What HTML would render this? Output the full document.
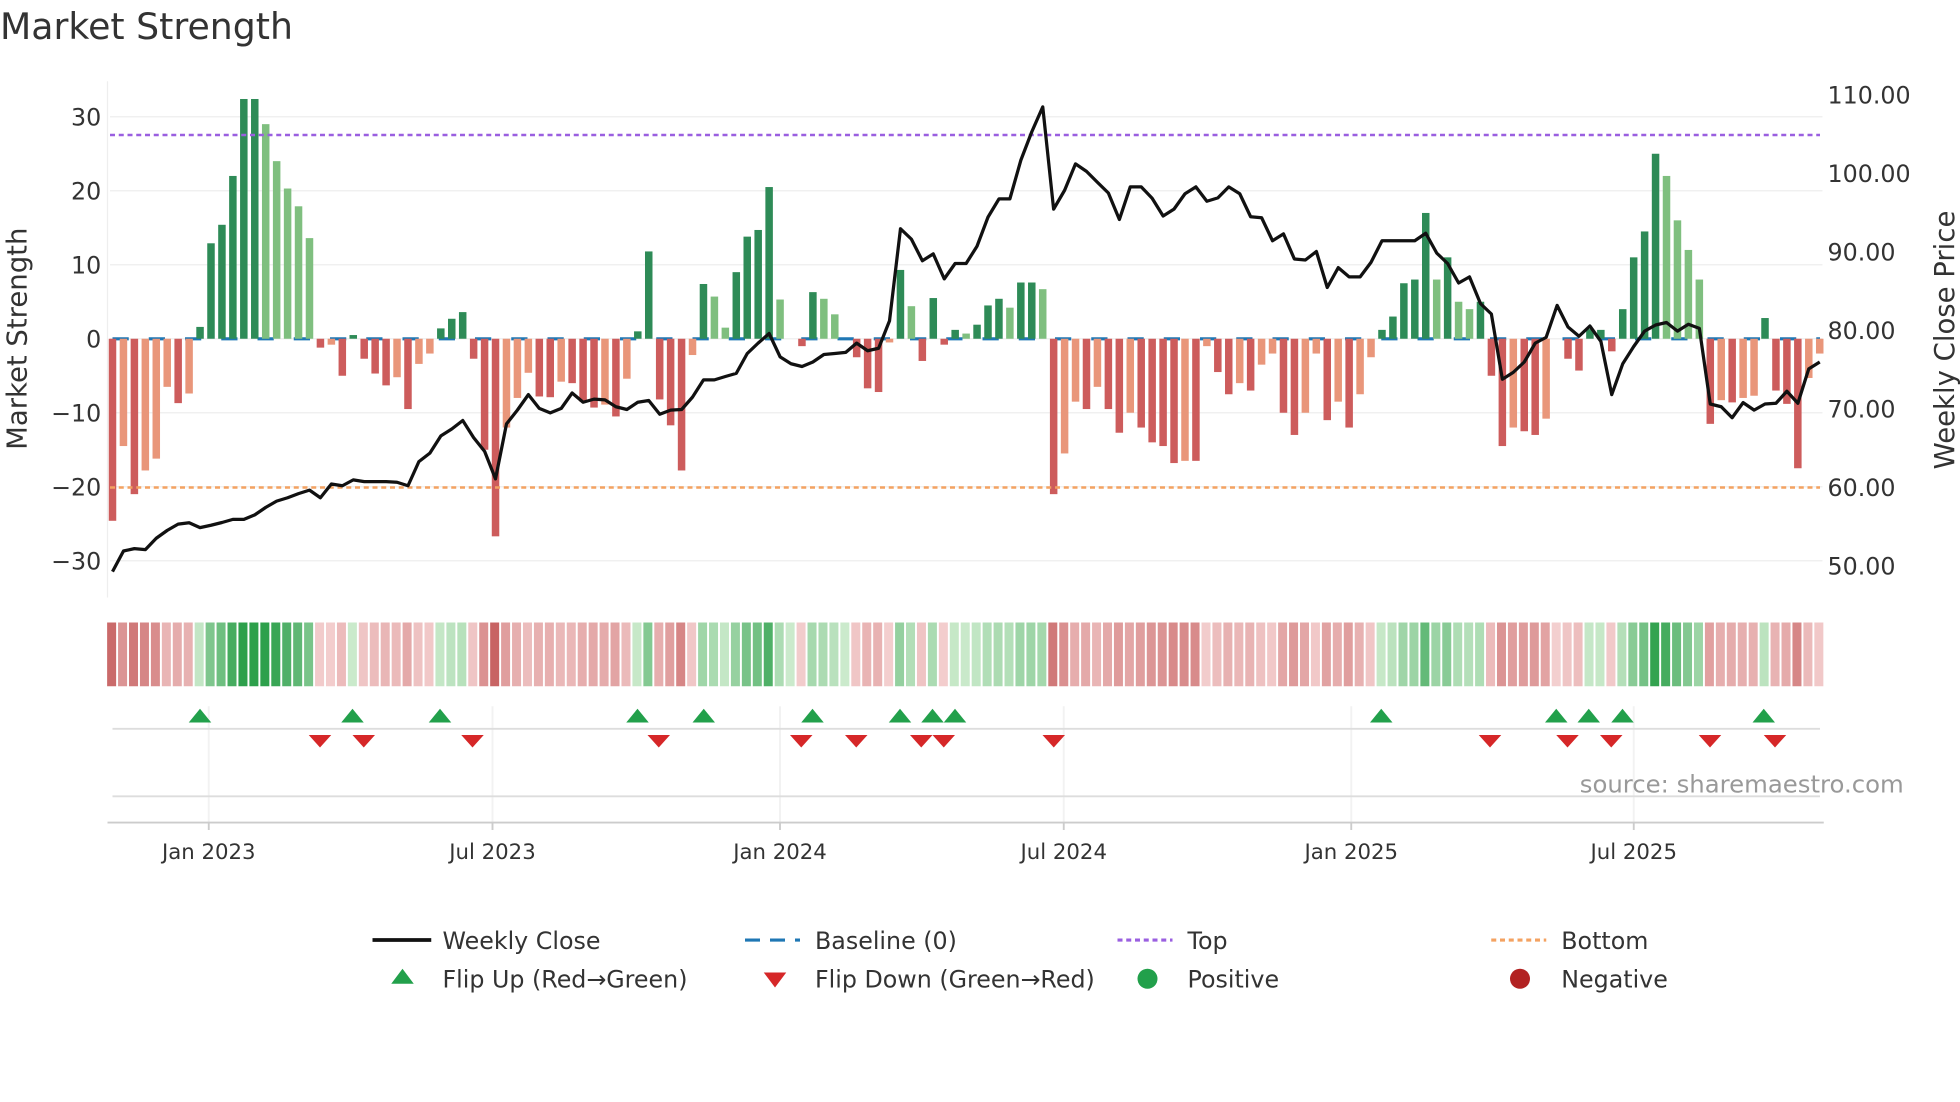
<!DOCTYPE html>
<html><head><meta charset="utf-8">
<style>
html,body{margin:0;padding:0;background:#fff;}
svg{display:block;}
text{font-family:"DejaVu Sans","Liberation Sans",sans-serif;fill:#333;}
</style></head>
<body>
<svg id="s" width="1960" height="1102" viewBox="0 0 1568 881.6" preserveAspectRatio="none" xmlns="http://www.w3.org/2000/svg">
<rect width="1568" height="882" fill="#fff"/>
<text x="0" y="31" font-size="29">Market Strength</text>
<g id="grid"></g>
<g id="bars"></g>
<g id="over"></g>
<g id="strip"></g>
<g id="marks"></g>
<text x="1523" y="634" font-size="19.5" text-anchor="end" style="fill:#999">source: sharemaestro.com</text>
<g id="legend" font-size="19">
<line x1="298" y1="752" x2="345" y2="752" stroke="#111" stroke-width="3"/>
<text x="354" y="759">Weekly Close</text>
<line x1="596" y1="752" x2="640" y2="752" stroke="#1f77b4" stroke-width="2.5" stroke-dasharray="12,8"/>
<text x="652" y="759">Baseline (0)</text>
<line x1="894" y1="752" x2="938" y2="752" stroke="#9a5fe0" stroke-width="2.5" stroke-dasharray="4,3"/>
<text x="950" y="759">Top</text>
<line x1="1193" y1="752" x2="1237" y2="752" stroke="#f4a261" stroke-width="2.5" stroke-dasharray="4,3"/>
<text x="1249" y="759">Bottom</text>
<polygon points="313,787 322,775 331,787" fill="#22a04b"/>
<text x="354" y="790">Flip Up (Red→Green)</text>
<polygon points="611,778 629,778 620,790" fill="#d62728"/>
<text x="652" y="790">Flip Down (Green→Red)</text>
<circle cx="918" cy="783" r="8" fill="#22a04b"/>
<text x="950" y="790">Positive</text>
<circle cx="1216" cy="783" r="8" fill="#b22222"/>
<text x="1249" y="790">Negative</text>
</g>
</svg>
<script>
var NS="http://www.w3.org/2000/svg";
function el(p,t,a,txt){var e=document.createElementNS(NS,t);for(var k in a)e.setAttribute(k,a[k]);if(txt!==undefined)e.textContent=txt;document.getElementById(p).appendChild(e);return e;}
var raw="-24.6R,-14.5O,-21R,-17.8O,-16.2O,-6.5O,-8.7R,-7.4O,1.6D,12.9D,15.4D,22D,32.4D,32.4D,29L,24L,20.3L,17.9L,13.6L,-1.2R,-0.8O,-5R,0.5D,-2.7R,-4.7R,-6.3R,-5.2O,-9.5R,-3.4O,-2O,1.4D,2.7D,3.6D,-2.7R,-15R,-26.7R,-12O,-8O,-4.6O,-7.8R,-7.9R,-5.8O,"+
"-6R,-8.5R,-9.3R,-8.9O,-10.5R,-5.4O,1D,11.8D,-8.2R,-11.7R,-17.8R,-2.2O,7.4D,5.7L,1.5L,9D,13.8D,14.7D,20.5D,5.3L,0.3N,-1R,6.3D,5.4L,3.3L,0.3N,-2.5R,-6.7R,-7.2R,-0.5O,9.3D,4.4L,-3R,5.5D,-0.8R,1.2D,0.7L,1.9D,4.5D,5.4D,4.2L,"+
"7.6D,7.6D,6.7L,"+
"-21R,-15.5O,-8.5O,-9.5R,-6.5O,-9.5R,-12.7R,-10O,-12R,-14R,-14.5R,-16.8R,-16.5O,-16.5R,-1O,-4.5R,-7.5R,-6O,-7R,-3.5O,-2O,-10R,-13R,-10O,-2O,-11R,-8.5O,-12R,-7.5O,-2.5O,1.2D,3D,7.5D,8D,17D,8L,11D,5L,"+
"4L,5D,-5R,-14.5R,-12O,-12.5R,-13R,-10.8O,-0.3N,-2.7R,-4.3R,1.3D,1.2D,-1.7R,4D,11D,14.5D,25D,22L,16L,12L,8L,-11.5R,-8.3O,-8.6R,-8O,-7.7O,2.8D,-7R,-8.8R,-17.5R,-5.3O,-2O";
var vals=raw.split(",").map(function(s){return {v:parseFloat(s),c:s.slice(-1)};});
var line=[1430,1370,1363,1366,1333,1310,1292,1288,1302,1295,1287,1278,1278,1265,1243,1225,1215,1203,1193,1215,1175,1180,1163,1168,1168,1168,1170,1180,1110,1085,1035,1015,990,1040,1080,1160,1000,960,915,955,968,955,
910,937,928,930,950,958,937,932,972,960,958,922,872,872,862,853,795,765,737,805,825,833,820,798,795,792,765,787,780,700,432,462,525,505,578,533,533,483,398,345,345,
232,150,77,
375,320,243,265,297,328,405,310,310,343,395,375,330,310,352,342,310,330,397,400,467,447,520,523,498,603,545,572,572,530,467,467,467,467,445,503,533,590,
572,650,680,870,850,820,765,748,655,718,745,715,760,915,825,775,730,712,705,730,710,722,942,950,982,938,960,942,940,905,940,840,820];
var Y0=271,U=5.92,X0=90,DX=8.755;
[30,20,10,0,-10,-20,-30].forEach(function(t){var y=Y0-t*U;
 el("grid","line",{x1:88,y1:y,x2:1458,y2:y,stroke:"#eeeeee","stroke-width":1});
 el("grid","text",{x:81,y:y+7,"font-size":19,"text-anchor":"end"},t<0?"\u2212"+(-t):""+t);});
[110,100,90,80,70,60,50].forEach(function(p){var y=264-(p-80)*6.28;el("grid","text",{x:1462,y:y+7,"font-size":19},p.toFixed(2));});
el("grid","line",{x1:86,y1:65,x2:86,y2:478,stroke:"#eee","stroke-width":1});
el("grid","text",{x:0,y:0,"font-size":22,"text-anchor":"middle",transform:"translate(21,271) rotate(-90)"},"Market Strength");
el("grid","text",{x:0,y:0,"font-size":22,"text-anchor":"middle",transform:"translate(1563,272) rotate(-90)"},"Weekly Close Price");
el("grid","line",{x1:90,y1:271,x2:1456,y2:271,stroke:"#1f77b4","stroke-width":2.5,"stroke-dasharray":"13,16"});
var cols={D:"#2e8b57",L:"#7fbf7f",R:"#cd5c5c",O:"#e9967a",N:"#ccc"};
vals.forEach(function(o,i){var x=X0+i*DX-3;var h=Math.abs(o.v)*U;
 var t=Math.min(Math.abs(o.v)/26,1),c;
 function mix(a,b){return "rgb("+a.map(function(v,k){return Math.round(v+(b[k]-v)*t);}).join(",")+")";}
 if(o.v>0)c=mix([205,235,205],[45,160,75]);else c=mix([244,208,208],[200,100,100]);
 el("strip","rect",{x:X0+i*DX-4.3,y:498,width:7.2,height:51,fill:c});
 if(o.c==="N")return;
 el("bars","rect",{x:x,y:o.v>0?Y0-h:Y0,width:6,height:h,fill:cols[o.c]});
});
el("over","line",{x1:88,y1:108,x2:1456,y2:108,stroke:"#9a5fe0","stroke-width":2,"stroke-dasharray":"4,3"});
el("over","line",{x1:88,y1:390,x2:1456,y2:390,stroke:"#f4a261","stroke-width":2,"stroke-dasharray":"4,3"});
var pts=line.map(function(zy,i){return (X0+i*DX).toFixed(1)+","+(64.3+zy*0.2748).toFixed(1);}).join(" ");
el("over","polyline",{points:pts,fill:"none",stroke:"#111","stroke-width":2.6,"stroke-linejoin":"round"});
[167,394,624,851,1081,1307].forEach(function(x){el("marks","line",{x1:x,y1:565,x2:x,y2:658,stroke:"#f2f2f2","stroke-width":1.5});});
el("marks","line",{x1:90,y1:583,x2:1456,y2:583,stroke:"#ddd","stroke-width":1.5});
el("marks","line",{x1:90,y1:637,x2:1456,y2:637,stroke:"#ddd","stroke-width":1.5});
el("marks","line",{x1:86,y1:658,x2:1459,y2:658,stroke:"#ccc","stroke-width":1.5});
[160,282,352,510,563,650,720,746,764,1105,1245,1271,1298,1411].forEach(function(x){el("marks","polygon",{points:(x-9)+",578 "+x+",567 "+(x+9)+",578",fill:"#22a04b"});});
[256,291,378,527,641,685,737,755,843,1192,1254,1289,1368,1420].forEach(function(x){el("marks","polygon",{points:(x-9)+",588 "+(x+9)+",588 "+x+",598",fill:"#d62728"});});
[["Jan 2023",167],["Jul 2023",394],["Jan 2024",624],["Jul 2024",851],["Jan 2025",1081],["Jul 2025",1307]].forEach(function(a){
 el("marks","line",{x1:a[1],y1:658,x2:a[1],y2:664,stroke:"#ccc","stroke-width":1.5});
 el("marks","text",{x:a[1],y:687,"font-size":17,"text-anchor":"middle"},a[0]);});
</script>
</body></html>
